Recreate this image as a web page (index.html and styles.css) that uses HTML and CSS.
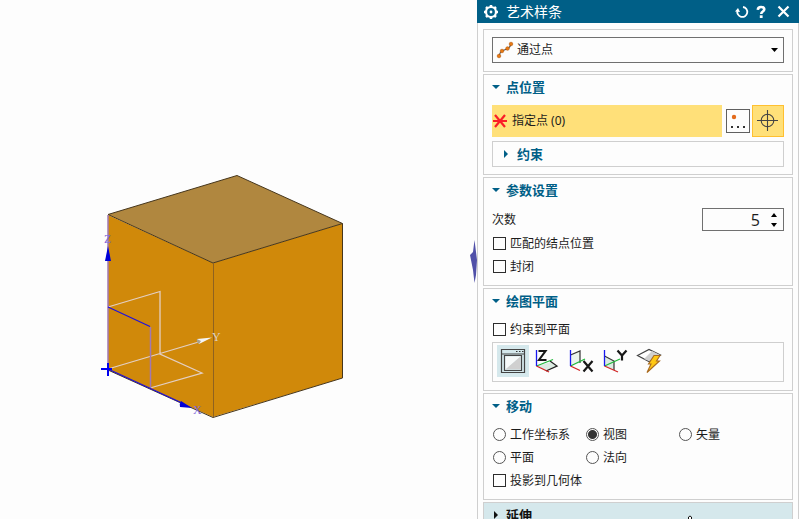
FILE: index.html
```html
<!DOCTYPE html>
<html lang="zh-CN">
<head>
<meta charset="utf-8">
<title>艺术样条</title>
<link rel="stylesheet" href="styles.css">
</head>
<body>
<div class="app">
  <main class="viewport">
    <svg class="scene" viewBox="0 0 477 519" preserveAspectRatio="xMinYMin slice" role="img" aria-label="模型视图">
      <path class="face" d="M108 215 213 263V417L108 370Z"/>
      <path class="face" d="M213 263 342.500 223.500V378L213 417Z"/>
      <path class="face-top" d="M108 214.500 237 175.500 342.500 223.500 213 263Z"/>
      <path class="edge" d="M108 214.500 237 175.500 342.500 223.500V378L213 417.500 108 370M108 214.500 213 263 342.500 223.500"/>
      <path class="edge-soft" d="M213.500 263V417"/>
      <path class="guide" d="M108 307 160 291.500V354L202 373 150 388M108 369 202 341M160 353.500V291.500"/>
      <path class="axis-soft" d="M108 215V369M150.500 327V388"/>
      <path class="axis" d="M108 307 150 326.500M108 369 182 403"/>
      <path class="axis-bold" d="M101 369H112M108 363V376"/>
      <path class="cone" d="M108 246 111 261H105Z"/>
      <path class="cone" d="M181 401 192 408 180 407Q179 404 181 401Z"/>
      <path class="cone-light" d="M197 339 212 337.500 199 344Z"/>
      <path class="cone-shade" d="M197 339 201 341 199 344Q196 342 197 339Z"/>
      <text class="axis-label" x="104" y="243">Z</text>
      <text class="axis-label" x="193" y="414">X</text>
      <text class="axis-label light" x="212" y="341">Y</text>
      <path class="spindle" d="M474.500 240 477 260 476 275 474.500 283 473 270 470 255 473 252Z"/>
    </svg>
  </main>

  <form class="panel">
    <header class="titlebar">
      <svg class="gear" viewBox="0 0 16 16" aria-hidden="true">
        <circle cx="8" cy="8" r="5" fill="none" stroke="currentColor" stroke-width="2.200"/>
        <circle cx="8" cy="8" r="1.400" fill="currentColor"/>
        <path d="M8 1V3.500M8 12.500V15M1 8H3.500M12.500 8H15M3 3 4.500 4.500M11.500 11.500 13 13M13 3 11.500 4.500M4.500 11.500 3 13" stroke="currentColor" stroke-width="2.500"/>
      </svg>
      <h1 class="title">艺术样条</h1>
      <button type="button" class="tool" aria-label="重置">
        <svg viewBox="0 0 14 14"><path d="M8 2A5 5 0 1 1 2.500 5.500" fill="none" stroke="currentColor" stroke-width="1.800"/><path d="M0 6.500 3 3 5 7Z" fill="currentColor"/></svg>
      </button>
      <button type="button" class="tool" aria-label="帮助">
        <svg viewBox="0 0 14 14"><path d="M2.800 4.800Q3 2 6 2T9.300 4.200Q9.300 5.500 7.800 6.500T6.200 9" fill="none" stroke="currentColor" stroke-width="2.600"/><path d="M4.800 10.300H7.600V13H4.800Z" fill="currentColor"/></svg>
      </button>
      <button type="button" class="tool close" aria-label="关闭">
        <svg viewBox="0 0 14 14"><path d="M1.500 1.500 11.500 11.500M11.500 1.500 1.500 11.500" fill="none" stroke="currentColor" stroke-width="2.200"/></svg>
      </button>
    </header>

    <div class="sections">
      <section class="section type">
        <div class="combo">
          <svg class="combo-icon" viewBox="0 0 18 18" aria-hidden="true">
            <path d="M3 15Q4 11 6 10T11 8 15 3" fill="none" stroke="#555" stroke-width="1.200"/>
            <g fill="#e87912" stroke="#b65708" stroke-width=".6"><circle cx="3" cy="15" r="1.800"/><circle cx="6" cy="10" r="1.800"/><circle cx="11.500" cy="7.500" r="1.800"/><circle cx="15" cy="3" r="1.800"/></g>
          </svg>
          <select class="select" aria-label="类型"><option>通过点</option></select>
          <svg class="combo-arrow" viewBox="0 0 7 4" aria-hidden="true"><path d="M0 0H7L3.500 4Z"/></svg>
        </div>
      </section>

      <section class="section">
        <h2 class="heading"><button type="button" class="toggle"><span class="caret down"></span>点位置</button></h2>
        <div class="body">
          <div class="pick">
            <div class="prompt">
              <svg class="star" viewBox="0 0 16 16" aria-hidden="true"><path d="M1 8H15M3 2 13 14M13 2 3 14" stroke="#fa1e28" stroke-width="2.200"/></svg>
              <span>指定点 (0)</span>
            </div>
            <button type="button" class="dialog-button" aria-label="点对话框">
              <svg viewBox="0 0 22 22"><circle cx="7" cy="7" r="2.200" fill="#e36b1c"/><path d="M4 16H6V18H4ZM10 16H12V18H10ZM16 16H18V18H16Z" fill="#333"/></svg>
            </button>
            <button type="button" class="target" aria-label="指定点">
              <svg viewBox="0 0 30 30"><path d="M4 14.500H25M14.500 4V25" stroke="#444" stroke-width="1.100"/><circle cx="14.500" cy="14.500" r="6.300" fill="none" stroke="#444" stroke-width="1.100"/></svg>
            </button>
          </div>
          <div class="nested"><button type="button" class="toggle"><span class="caret side"></span>约束</button></div>
        </div>
      </section>

      <section class="section">
        <h2 class="heading"><button type="button" class="toggle"><span class="caret down"></span>参数设置</button></h2>
        <div class="body">
          <div class="field">
            <label for="degree">次数</label>
            <div class="spinner">
              <input id="degree" type="text" inputmode="numeric" value="5">
              <div class="steps">
                <button type="button" aria-label="增加"><svg viewBox="0 0 6 4"><path d="M0 4H6L3 0Z"/></svg></button>
                <button type="button" aria-label="减少"><svg viewBox="0 0 6 4"><path d="M0 0H6L3 4Z"/></svg></button>
              </div>
            </div>
          </div>
          <label class="choice"><input type="checkbox">匹配的结点位置</label>
          <label class="choice"><input type="checkbox">封闭</label>
        </div>
      </section>

      <section class="section">
        <h2 class="heading"><button type="button" class="toggle"><span class="caret down"></span>绘图平面</button></h2>
        <div class="body plane">
          <label class="choice"><input type="checkbox">约束到平面</label>
          <div class="toolbar">
            <button type="button" class="plane-button active" aria-label="视图">
              <svg viewBox="0 0 32 32"><path d="M4.500 4.500H27.500V27.500H4.500ZM4.500 9H27.500M7.500 10.500H24.500V25.500H7.500Z" fill="none" stroke="#444" stroke-width="1.200"/><path d="M8.500 24.500V11.500H23.500Z" fill="#f8fafa"/><path d="M8.500 24.500H23.500V11.500Z" fill="#d0d0d0"/><path d="M19 6.500H20.500M22 6.500H23.500M25 6.500H26.500" stroke="#333"/></svg>
            </button>
            <button type="button" class="plane-button" aria-label="XC-YC 平面">
              <svg viewBox="0 0 32 32"><path d="M6 21 20 17 26 21 15 26Z" fill="#dcebe2"/><path d="M19 16 26 21 15 26" fill="none" stroke="#222" stroke-width="1.300"/><path d="M5.500 21 22 14.500" stroke="#20b83a" stroke-width="1.300"/><path d="M5.500 21 18 27" stroke="#d12424" stroke-width="1.300"/><path d="M5.500 5V21" stroke="#1818f0" stroke-width="1.300"/><path d="M7.500 6H14.500L8 15H15.500" fill="none" stroke="#181818" stroke-width="2.100"/></svg>
            </button>
            <button type="button" class="plane-button" aria-label="YC-ZC 平面">
              <svg viewBox="0 0 32 32"><path d="M6 10 15 6V18L6 21Z" fill="#eaf3ee"/><path d="M5.500 10 15 6V18" fill="none" stroke="#333" stroke-width="1.200"/><path d="M5.500 21 20 14" stroke="#20b83a" stroke-width="1.300"/><path d="M5.500 21 15 25.500" stroke="#d12424" stroke-width="1.300"/><path d="M5.500 5V21" stroke="#1818f0" stroke-width="1.300"/><path d="M18.500 16 27.500 26.500M27.500 16 18.500 26.500" stroke="#181818" stroke-width="2.200"/></svg>
            </button>
            <button type="button" class="plane-button" aria-label="XC-ZC 平面">
              <svg viewBox="0 0 32 32"><path d="M6 12 15 16V25L6 21Z" fill="#dcebe2"/><path d="M5.500 11 15 16V25" fill="none" stroke="#333" stroke-width="1.200"/><path d="M5.500 21 21 14" stroke="#20b83a" stroke-width="1.300"/><path d="M5.500 21 19 27" stroke="#d12424" stroke-width="1.300"/><path d="M5.500 5V21" stroke="#1818f0" stroke-width="1.300"/><path d="M18.500 5.500 23 10.500 27.500 5.500M23 10V15.500" fill="none" stroke="#181818" stroke-width="2.200"/></svg>
            </button>
            <button type="button" class="plane-button" aria-label="自动判断平面">
              <svg viewBox="0 0 32 32"><path d="M4.500 10.500 16 4.500 27.500 10 16 16.500Z" fill="#fff" stroke="#444" stroke-width="1.200"/><path d="M11 14 19 6 27 10 16 16Z" fill="#d0d0d0"/><path d="M21 10.500H27L23.500 16H26.500L14 27.500 18 19H15.500Z" fill="#ffc814" stroke="#a96b21" stroke-width="1.100"/></svg>
            </button>
          </div>
        </div>
      </section>

      <section class="section">
        <h2 class="heading"><button type="button" class="toggle"><span class="caret down"></span>移动</button></h2>
        <div class="body move">
          <div class="radios">
            <label class="choice"><input type="radio" name="move">工作坐标系</label>
            <label class="choice"><input type="radio" name="move" checked>视图</label>
            <label class="choice"><input type="radio" name="move">矢量</label>
            <label class="choice"><input type="radio" name="move">平面</label>
            <label class="choice"><input type="radio" name="move">法向</label>
          </div>
          <label class="choice"><input type="checkbox">投影到几何体</label>
        </div>
      </section>

      <section class="section extend">
        <h2 class="heading"><button type="button" class="toggle"><span class="caret side"></span>延伸</button></h2>
        <svg class="hand" viewBox="0 0 8 10" aria-hidden="true"><path d="M2.500 10V2Q4 0 5.500 2V10" fill="#fff" stroke="#111"/></svg>
      </section>
    </div>
  </form>
</div>
</body>
</html>
```
FILE: styles.css
```css
* {
  box-sizing: border-box;
}

body {
  margin: 0;
  font: 12px/16px "Noto Sans", "Noto Sans CJK SC", sans-serif;
  color: #1c1c1c;
  background: #fdfdfd;
}

button,
select,
input {
  font: inherit;
  color: inherit;
  margin: 0;
}

button {
  padding: 0;
  border: 0;
  background: none;
}

svg {
  display: block;
}

.app {
  display: flex;
  height: 100vh;
  overflow: hidden;
}

.viewport {
  flex: 1;
  min-width: 0;
}

.scene {
  width: 100%;
  height: 100%;
}

.face { fill: #d0890a; }
.face-top { fill: #b0873f; }
.edge { fill: none; stroke: #46361c; }
.edge-soft { stroke: #8f6220; }
.guide { fill: none; stroke: #e3cfc4; stroke-width: 1.3; }
.axis-soft { fill: none; stroke: #a078b4; stroke-width: 1.5; }
.axis { fill: none; stroke: #1c10e0; stroke-width: 1.2; }
.axis-bold { stroke: #0000f0; stroke-width: 2; }
.cone { fill: #0000d8; }
.cone-light { fill: #f4f4f4; }
.cone-shade { fill: #a9a08c; }
.axis-label { font: 12px "Liberation Serif", serif; fill: #8068d8; }
.axis-label.light { fill: #dcd0c8; }
.spindle { fill: #5050a8; }

.panel {
  flex: 0 0 322px;
  border: 1px solid #cfcfcf;
  border-width: 0 1px;
}

.titlebar {
  display: flex;
  align-items: center;
  height: 23px;
  margin: 0 -1px;
  padding: 0 8px 0 6px;
  color: #fff;
  background: #005f87;
}

.gear {
  width: 16px;
  height: 16px;
}

.title {
  flex: 1;
  margin: 0 0 0 7px;
  font-size: 14px;
  line-height: 20px;
  font-weight: 400;
}

.tool {
  width: 14px;
  height: 14px;
  margin-left: 6px;
}

.tool.close {
  margin-left: 8px;
}

.sections {
  display: flex;
  flex-direction: column;
  gap: 2px;
  padding: 6px 5px 0;
}

.section {
  border: 1px solid #cfcfcf;
}

.type {
  padding: 7px 8px 8px;
}

.combo {
  position: relative;
}

.select {
  display: block;
  width: 100%;
  height: 26px;
  padding: 0 24px;
  border: 1px solid #707070;
  border-radius: 0;
  background: #fdfdfd;
  appearance: none;
}

.combo-icon {
  position: absolute;
  left: 4px;
  top: 4px;
  width: 18px;
  height: 18px;
}

.combo-arrow {
  position: absolute;
  right: 6px;
  top: 11px;
  width: 7px;
  height: 4px;
}

.heading {
  margin: 0;
  font-size: 13px;
}

.toggle {
  display: flex;
  align-items: center;
  width: 100%;
  height: 23px;
  padding-left: 8px;
  font-size: 13px;
  font-weight: 700;
  color: #005f87;
}

.caret {
  width: 14px;
}

.caret::before {
  content: "";
  display: block;
  width: 0;
  border: 0 solid transparent;
}

.caret.down::before {
  border-width: 4px 4px 0;
  border-top-color: currentColor;
}

.caret.side::before {
  margin-left: 2px;
  border-width: 4px 0 4px 4px;
  border-left-color: currentColor;
}

.body {
  padding: 7px 8px;
}

.pick {
  display: flex;
  align-items: center;
  margin-bottom: 4px;
}

.prompt {
  flex: 1;
  display: flex;
  align-items: center;
  gap: 4px;
  height: 32px;
  background: #ffe079;
}

.star {
  width: 16px;
  height: 16px;
}

.dialog-button {
  width: 24px;
  height: 24px;
  margin: 0 2px 0 4px;
  border: 1px solid #606060;
}

.target {
  width: 32px;
  height: 32px;
  border: 1px solid #ffc030;
  background: #ffe079;
}

.nested {
  padding-bottom: 1px;
  border: 1px solid #cfcfcf;
}

.nested .toggle {
  padding-left: 9px;
}

.nested .caret {
  width: 15px;
}

.plane {
  padding: 6px 8px 8px;
}

.move {
  padding-top: 6px;
}

.field {
  display: flex;
  align-items: center;
  justify-content: space-between;
  margin-bottom: 1px;
}

.spinner {
  display: flex;
  width: 82px;
  height: 23px;
  border: 1px solid #707070;
}

.spinner input {
  flex: 1;
  min-width: 0;
  padding: 0;
  border: 0;
  background: none;
  font-family: "Open Sans", sans-serif;
  font-size: 16px;
  text-align: right;
}

.steps {
  display: flex;
  flex-direction: column;
  justify-content: center;
  gap: 6px;
  padding: 0 6px 0 11px;
}

.steps svg {
  width: 6px;
  height: 4px;
}

.choice {
  display: flex;
  align-items: center;
  gap: 4px;
  height: 23px;
  padding-left: 1px;
}

.choice input {
  flex: none;
  appearance: none;
  width: 13px;
  height: 13px;
  border: 1px solid #2c2c2c;
  background: #fdfdfd;
}

.choice input[type="radio"] {
  border-color: #555;
  border-radius: 50%;
}

.choice input[type="radio"]:checked {
  background: radial-gradient(circle, #333 4px, #fdfdfd 5px);
}

.toolbar {
  display: flex;
  gap: 2px;
  height: 40px;
  margin-top: 1px;
  padding: 2px 4px;
  border: 1px solid #cfcfcf;
}

.plane-button {
  width: 32px;
  height: 32px;
}

.plane-button.active {
  background: #d5e8ec;
}

.radios {
  display: grid;
  grid-template-columns: repeat(3, 93px);
}

.extend {
  position: relative;
  height: 30px;
  background: #d5e8ec;
}

.extend .toggle {
  color: #111;
}

.hand {
  position: absolute;
  left: 202px;
  top: 12px;
  width: 8px;
  height: 10px;
}
```
